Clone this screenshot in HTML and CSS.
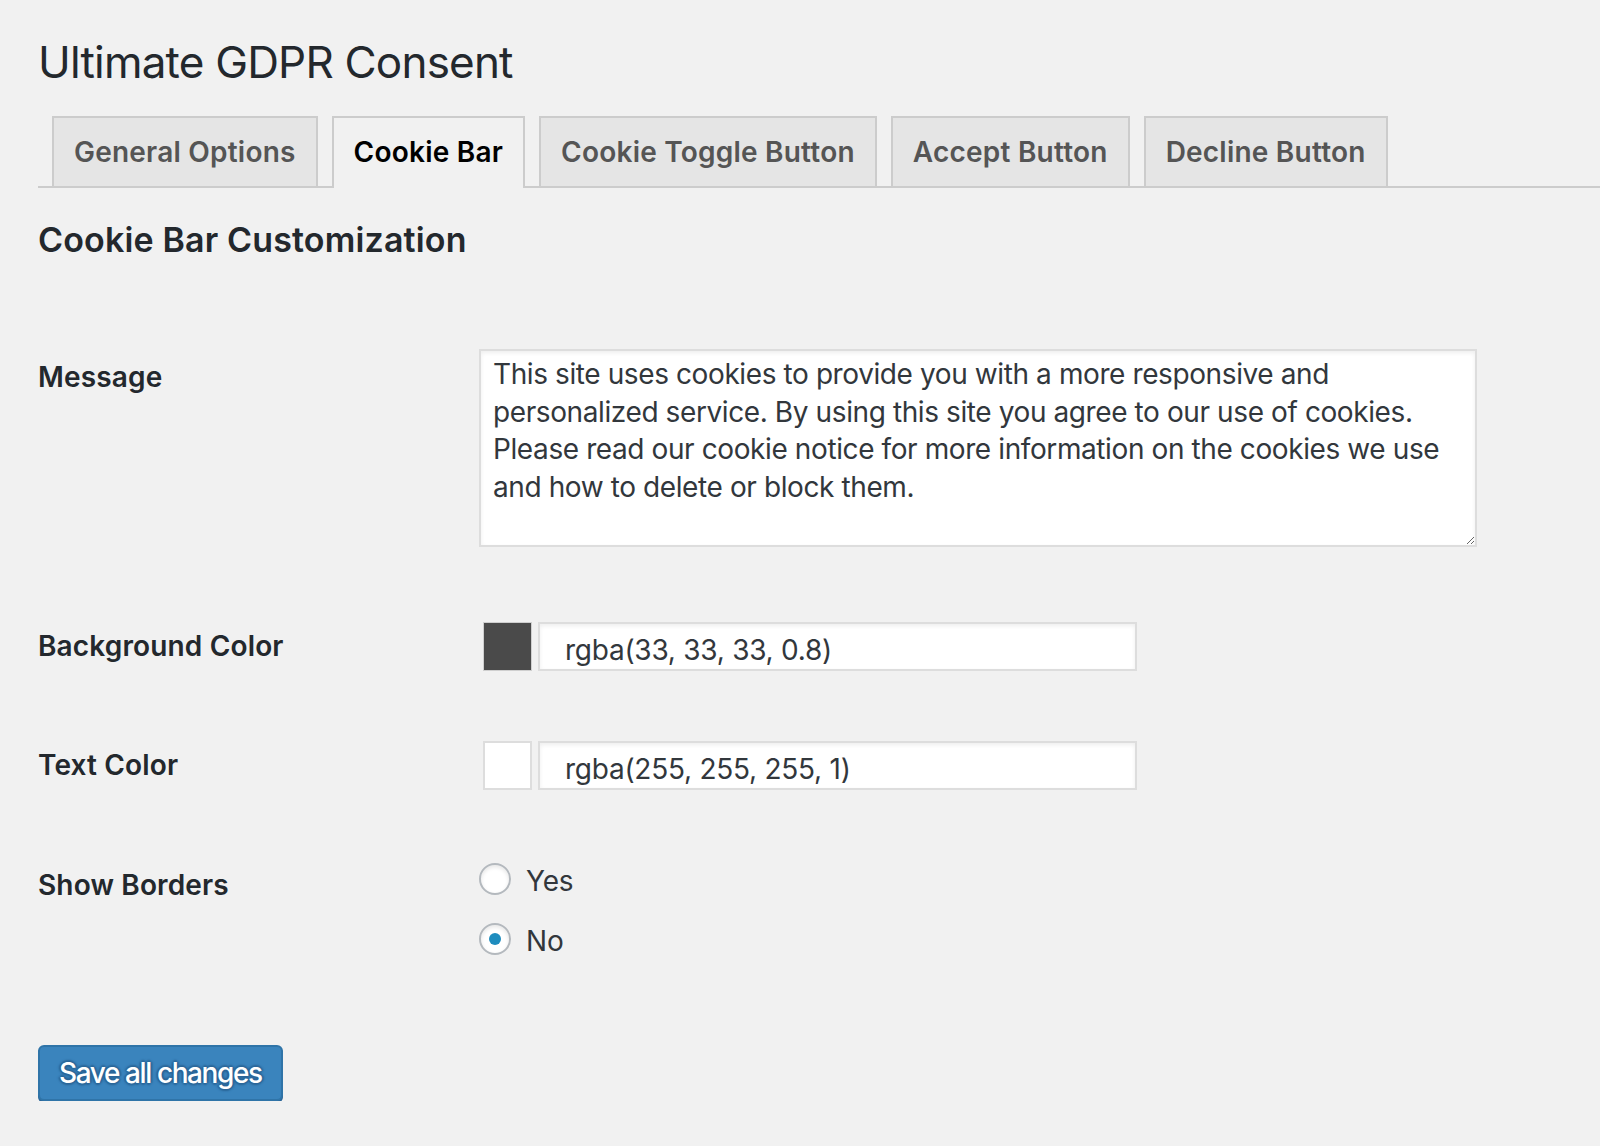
FILE: index.html
```html
<!DOCTYPE html>
<html lang="en">
<head>
<meta charset="utf-8">
<title>Ultimate GDPR Consent</title>
<link rel="stylesheet" href="styles.css">
</head>
<body>
<div class="wrap">
  <h1 class="page-title">Ultimate GDPR Consent</h1>
  <nav class="tabs">
    <a class="tab">General Options</a>
    <a class="tab tab-active">Cookie Bar</a>
    <a class="tab">Cookie Toggle Button</a>
    <a class="tab">Accept Button</a>
    <a class="tab">Decline Button</a>
  </nav>
  <h2 class="section-title">Cookie Bar Customization</h2>
  <form class="form">
    <div class="row row-message">
      <label class="row-label">Message</label>
      <div class="row-field">
        <textarea class="message">This site uses cookies to provide you with a more responsive and personalized service. By using this site you agree to our use of cookies. Please read our cookie notice for more information on the cookies we use and how to delete or block them.</textarea>
      </div>
    </div>
    <div class="row row-bg">
      <label class="row-label row-label-color">Background Color</label>
      <div class="row-field color-field">
        <span class="swatch swatch-dark"></span>
        <input class="color-input" type="text" value="rgba(33, 33, 33, 0.8)">
      </div>
    </div>
    <div class="row row-text">
      <label class="row-label row-label-color">Text Color</label>
      <div class="row-field color-field">
        <span class="swatch swatch-light"></span>
        <input class="color-input" type="text" value="rgba(255, 255, 255, 1)">
      </div>
    </div>
    <div class="row row-borders">
      <label class="row-label row-label-radio">Show Borders</label>
      <div class="row-field radios">
        <label class="option"><input type="radio" name="borders" class="radio"><span>Yes</span></label>
        <label class="option option-second"><input type="radio" name="borders" class="radio" checked><span>No</span></label>
      </div>
    </div>
    <div class="actions">
      <button type="button" class="button-primary">Save all changes</button>
    </div>
  </form>
</div>
</body>
</html>
```

FILE: styles.css
```css
html, body {
  margin: 0;
  padding: 0;
}

body {
  background: #f1f1f1;
  color: #23282d;
  font-family: Inter, "Noto Sans", "Liberation Sans", sans-serif;
}

.wrap {
  padding-left: 38px;
}

.page-title {
  margin: 0;
  padding-top: 34px;
  font-size: 44px;
  line-height: 57px;
  font-weight: 400;
  letter-spacing: -0.8px;
  color: #23282d;
}

.tabs {
  display: flex;
  margin-top: 25px;
  border-bottom: 2px solid #ccc;
}

.tab {
  margin-left: 14px;
  padding: 10px 20px;
  border: 2px solid #ccc;
  border-bottom: none;
  background: #e5e5e5;
  color: #555;
  font-size: 28px;
  line-height: 48px;
  font-weight: 600;
  letter-spacing: 0.22px;
  text-decoration: none;
}

.tab-active {
  background: #f1f1f1;
  color: #000;
  padding-bottom: 12px;
  margin-bottom: -2px;
}

.section-title {
  margin: 30px 0 0;
  font-size: 34px;
  line-height: 44px;
  font-weight: 600;
  letter-spacing: 0.15px;
  color: #23282d;
}

.form {
  margin-top: 87px;
}

.row {
  display: flex;
  align-items: flex-start;
}

.row-label {
  flex: none;
  width: 441px;
  font-size: 28px;
  line-height: 36px;
  font-weight: 600;
  letter-spacing: 0.15px;
  color: #23282d;
}

.row-message .row-label {
  padding-top: 10px;
}

.message {
  display: block;
  box-sizing: border-box;
  width: 998px;
  height: 198px;
  margin: 0;
  padding: 5px 12px;
  border: 2px solid #ddd;
  background: #fff;
  box-shadow: inset 0 2px 4px rgba(0, 0, 0, 0.07);
  font-family: Inter, "Noto Sans", "Liberation Sans", sans-serif;
  font-size: 28px;
  line-height: 37.5px;
  letter-spacing: -0.4px;
  color: #32373c;
}

.row-bg {
  margin-top: 75px;
}

.row-text {
  margin-top: 70px;
}

.row-label-color {
  padding-top: 6px;
}

.color-field {
  display: flex;
  align-items: flex-start;
  padding-left: 4px;
}

.swatch {
  box-sizing: border-box;
  width: 49px;
  height: 49px;
  margin-right: 6px;
}

.swatch-dark {
  background: #4a4a4a;
  border: 1px solid #cfcfcf;
}

.swatch-light {
  background: #fff;
  border: 2px solid #ddd;
}

.color-input {
  box-sizing: border-box;
  width: 599px;
  height: 49px;
  margin: 0;
  padding: 6px 20px 0 25px;
  border: 2px solid #ddd;
  background: #fff;
  box-shadow: inset 0 2px 4px rgba(0, 0, 0, 0.07);
  font-family: Inter, "Noto Sans", "Liberation Sans", sans-serif;
  font-size: 28px;
  letter-spacing: -0.25px;
  color: #32373c;
  outline: none;
}

.row-borders {
  margin-top: 73px;
}

.row-label-radio {
  padding-top: 4px;
}

.radios {
  display: flex;
  flex-direction: column;
}

.option {
  display: flex;
  align-items: flex-start;
  font-size: 28px;
  line-height: 36px;
  letter-spacing: -0.2px;
  color: #32373c;
}

.option-second {
  margin-top: 24px;
}

.radio {
  -webkit-appearance: none;
  appearance: none;
  box-sizing: border-box;
  width: 32px;
  height: 32px;
  margin: 0 15px 0 0;
  border: 2px solid #b4b9be;
  border-radius: 50%;
  background: #fff;
  box-shadow: inset 0 2px 4px rgba(0, 0, 0, 0.1);
  display: flex;
  align-items: center;
  justify-content: center;
}

.radio:checked::before {
  content: "";
  width: 12px;
  height: 12px;
  border-radius: 50%;
  background: #1e8cbe;
}

.actions {
  margin-top: 86px;
}

.button-primary {
  box-sizing: border-box;
  height: 56px;
  margin: 0;
  padding: 0 19px;
  border: 2px solid #2f74a8;
  border-radius: 6px;
  background: #3a84bd;
  box-shadow: 0 2px 0 #2a6597;
  color: #fff;
  text-shadow: 0 -2px 2px #2a6597, 2px 0 2px #2a6597, 0 2px 2px #2a6597, -2px 0 2px #2a6597;
  font-family: Inter, "Noto Sans", "Liberation Sans", sans-serif;
  font-size: 28px;
  line-height: 52px;
  font-weight: 500;
  letter-spacing: -1.4px;
}
```
